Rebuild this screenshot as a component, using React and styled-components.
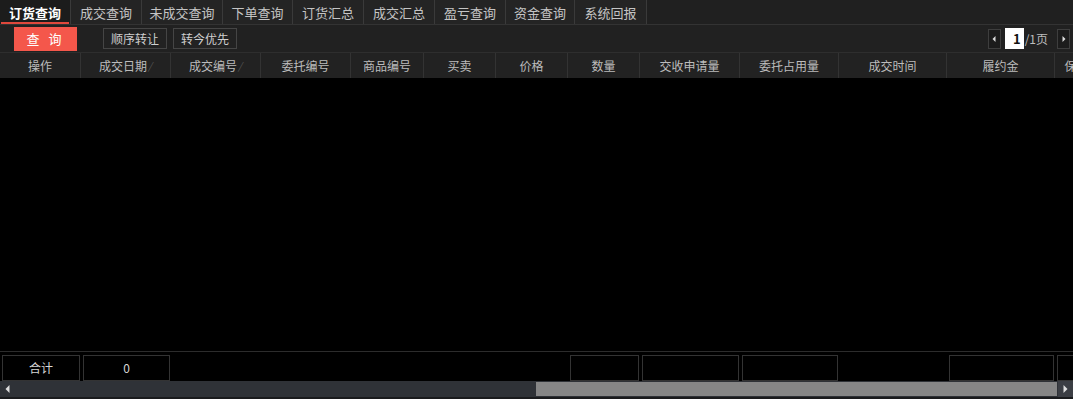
import React from "react";
import styled, { createGlobalStyle } from "styled-components";

const tabs = [
  { title: "订货查询", width: 71 },
  { title: "成交查询", width: 71 },
  { title: "未成交查询", width: 81 },
  { title: "下单查询", width: 70 },
  { title: "订货汇总", width: 71 },
  { title: "成交汇总", width: 71 },
  { title: "盈亏查询", width: 71 },
  { title: "资金查询", width: 69 },
  { title: "系统回报", width: 72 },
];

const columns = [
  { title: "操作", width: 81 },
  { title: "成交日期", width: 90, sort: true },
  { title: "成交编号", width: 90, sort: true },
  { title: "委托编号", width: 90 },
  { title: "商品编号", width: 73 },
  { title: "买卖", width: 72 },
  { title: "价格", width: 72 },
  { title: "数量", width: 72 },
  { title: "交收申请量", width: 100 },
  { title: "委托占用量", width: 99 },
  { title: "成交时间", width: 108 },
  { title: "履约金", width: 108 },
  { title: "保证金", width: 56 },
];

// footer cells: null means no box under that column
const footer = ["合计", "0", null, null, null, null, null, "", "", "", null, "", ""];

const GlobalStyle = createGlobalStyle`
  html, body {
    margin: 0;
    padding: 0;
    background: #000;
    font-family: "Noto Sans CJK SC", "Noto Sans", sans-serif;
  }
`;

const Page = styled.div`
  height: 399px;
  width: 1073px;
  display: flex;
  flex-direction: column;
  background: #000;
  overflow: hidden;
`;

const TabBar = styled.div`
  display: flex;
  height: 24px;
  background: #202020;
  border-bottom: 1px solid #333;
  flex-shrink: 0;
`;

const Tab = styled.div`
  position: relative;
  flex: 0 0 ${(p) => p.$w}px;
  display: flex;
  align-items: center;
  justify-content: center;
  height: 24px;
  box-sizing: border-box;
  border-right: 1px solid #3a3a3a;
  font-size: 13px;
  color: ${(p) => (p.$active ? "#fff" : "#c4c4c4")};
  font-weight: ${(p) => (p.$active ? "bold" : "normal")};
  background: ${(p) => (p.$active ? "#1c1c1c" : "#242424")};

  &::after {
    content: "";
    display: ${(p) => (p.$active ? "block" : "none")};
    position: absolute;
    left: 1px;
    right: 1px;
    bottom: 0;
    height: 2px;
    background: #e0483c;
  }
`;

const Toolbar = styled.div`
  display: flex;
  align-items: center;
  height: 27px;
  background: #212121;
  padding: 0 3px 0 14px;
  flex-shrink: 0;
`;

const QueryButton = styled.button`
  width: 63px;
  height: 24px;
  border: none;
  background: #f4574b;
  color: #fff;
  font-family: inherit;
  font-size: 13px;
  letter-spacing: 3px;
  padding: 0;
  margin-right: 26px;
`;

const PlainButton = styled.button`
  height: 21px;
  padding: 0 7px;
  margin-right: 6px;
  background: #222;
  border: 1px solid #454545;
  color: #cfcfcf;
  font-family: inherit;
  font-size: 12px;
`;

const Pager = styled.div`
  margin-left: auto;
  display: flex;
  align-items: center;
  gap: 4px;
  color: #bdbdbd;
  font-size: 12px;
`;

const ArrowBox = styled.div`
  width: 13px;
  height: 20px;
  box-sizing: border-box;
  border: 1px solid #3e3e3e;
  background: #1c1c1c;
  display: flex;
  align-items: center;
  justify-content: center;
  margin-left: ${(p) => p.$gap || 0}px;
`;

const PageInput = styled.div`
  width: 19px;
  height: 21px;
  background: #fff;
  color: #111;
  font-size: 13px;
  font-weight: bold;
  display: flex;
  align-items: center;
  justify-content: flex-end;
  padding-right: 3px;
  box-sizing: border-box;
  margin-right: -3px;
`;

const Row = styled.div`
  display: flex;
  flex-shrink: 0;
`;

const HeaderRow = styled(Row)`
  height: 25px;
  background: #222;
  border-top: 1px solid #2e2e2e;
`;

const HeadCell = styled.div`
  flex: 0 0 ${(p) => p.$w}px;
  box-sizing: border-box;
  border-right: 1px solid #333;
  display: flex;
  align-items: center;
  justify-content: center;
  font-size: 12px;
  color: #bcbcbc;
  white-space: nowrap;
`;

const SortMark = styled.span`
  color: #555;
  font-size: 10px;
  margin-left: 1px;
  font-style: italic;
`;

const Body = styled.div`
  flex: 1;
  background: #000;
`;

const FooterRow = styled(Row)`
  height: 29px;
  border-top: 1px solid #2c2c2c;
  background: #000;
  align-items: center;
`;

const FootCell = styled.div`
  flex: 0 0 ${(p) => p.$w}px;
  box-sizing: border-box;
  padding: 0 1px 0 2px;
  height: 24px;
`;

const FootBox = styled.div`
  height: 100%;
  border: 1px solid #333;
  display: flex;
  align-items: center;
  justify-content: center;
  color: #d6d6d6;
  font-size: 12px;
`;

const ScrollBar = styled.div`
  display: flex;
  height: 16px;
  background: #2f3237;
  border-bottom: 2px solid #1a1b1d;
  flex-shrink: 0;
`;

const ScrollArrow = styled.div`
  width: 15px;
  display: flex;
  align-items: center;
  justify-content: center;
  background: ${(p) => p.$bg || "#2f3237"};
`;

const Track = styled.div`
  flex: 1;
  display: flex;
  padding: 1px 0;
`;

const Thumb = styled.div`
  background: #868686;
  height: 100%;
`;

const Tri = ({ dir, color = "#ccc", size = 4 }) => (
  <svg width={size + 1} height={size * 2} viewBox={`0 0 ${size} ${size * 2}`}>
    {dir === "left" ? (
      <polygon points={`${size},0 0,${size} ${size},${size * 2}`} fill={color} />
    ) : (
      <polygon points={`0,0 ${size},${size} 0,${size * 2}`} fill={color} />
    )}
  </svg>
);

export default function App() {
  const thumbLeft = 521;
  const thumbWidth = 521;
  return (
    <Page>
      <GlobalStyle />
      <TabBar>
        {tabs.map((t, i) => (
          <Tab key={t.title} $w={t.width} $active={i === 0}>
            {t.title}
          </Tab>
        ))}
      </TabBar>
      <Toolbar>
        <QueryButton>查 询</QueryButton>
        <PlainButton>顺序转让</PlainButton>
        <PlainButton>转今优先</PlainButton>
        <Pager>
          <ArrowBox>
            <Tri dir="left" color="#ddd" size={3} />
          </ArrowBox>
          <PageInput>1</PageInput>
          <span>/1页</span>
          <ArrowBox $gap={5}>
            <Tri dir="right" color="#ddd" size={3} />
          </ArrowBox>
        </Pager>
      </Toolbar>
      <HeaderRow>
        {columns.map((c) => (
          <HeadCell key={c.title} $w={c.width}>
            {c.title}
            {c.sort && <SortMark>/</SortMark>}
          </HeadCell>
        ))}
      </HeaderRow>
      <Body />
      <FooterRow>
        {columns.map((c, i) => (
          <FootCell key={c.title} $w={c.width}>
            {footer[i] !== null && <FootBox>{footer[i]}</FootBox>}
          </FootCell>
        ))}
      </FooterRow>
      <ScrollBar>
        <ScrollArrow>
          <Tri dir="left" color="#ddd" size={4} />
        </ScrollArrow>
        <Track>
          <div style={{ width: thumbLeft }} />
          <Thumb style={{ width: thumbWidth }} />
        </Track>
        <ScrollArrow $bg="#3b3e44">
          <Tri dir="right" color="#ddd" size={4} />
        </ScrollArrow>
      </ScrollBar>
    </Page>
  );
}
